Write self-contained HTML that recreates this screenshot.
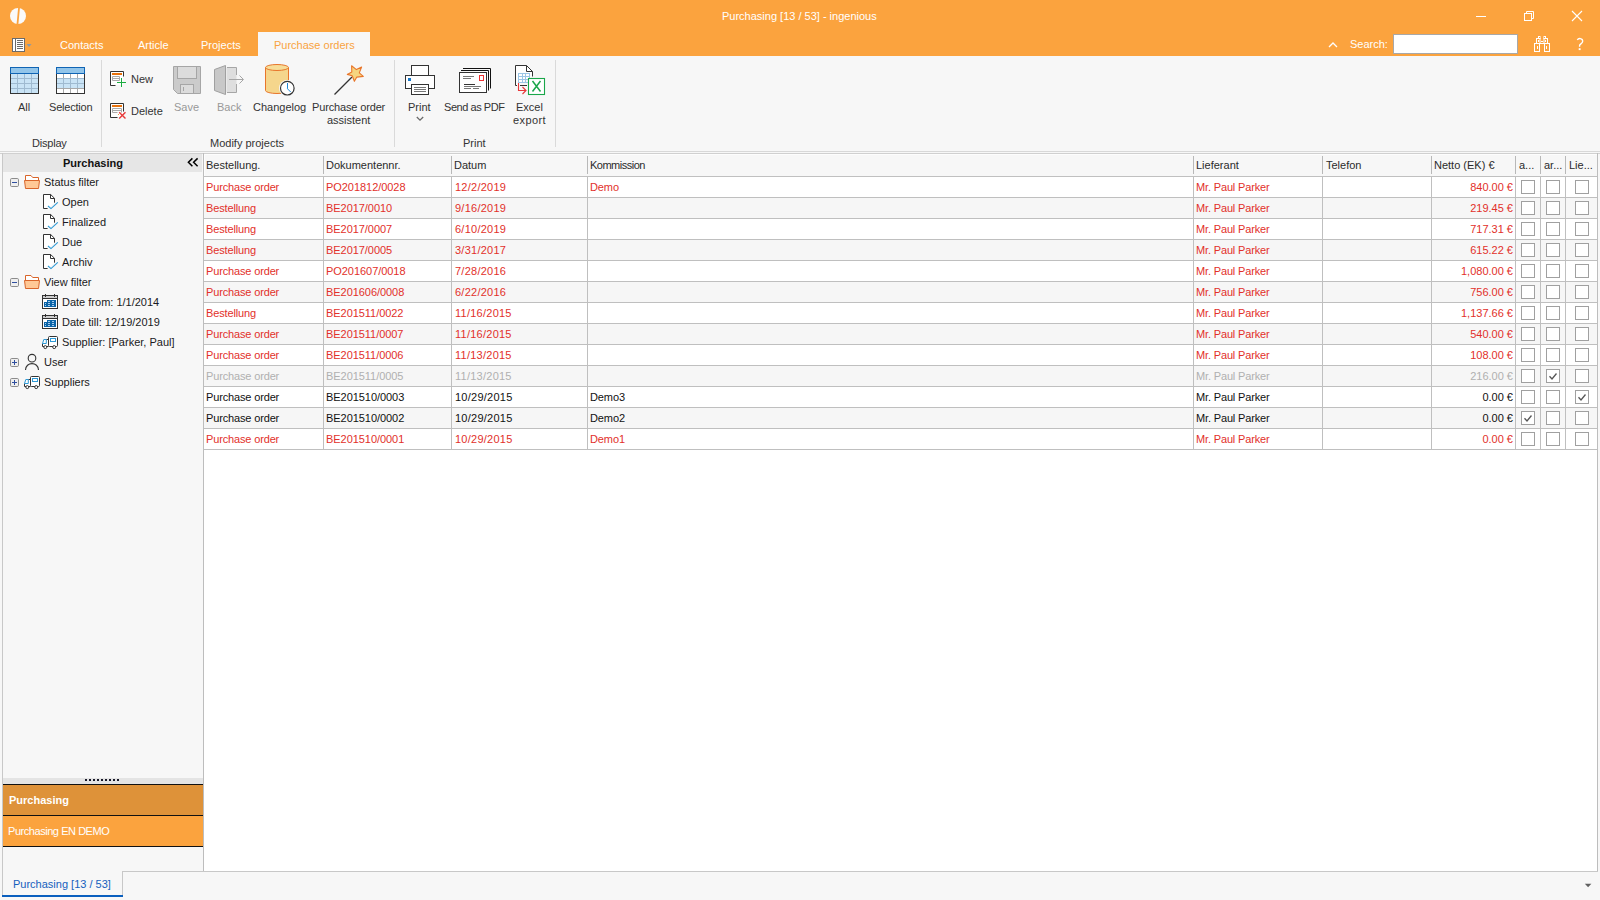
<!DOCTYPE html>
<html><head><meta charset="utf-8">
<style>
*{margin:0;padding:0;box-sizing:border-box}
html,body{width:1600px;height:900px;overflow:hidden;background:#f7f7f7;font-family:"Liberation Sans",sans-serif;font-size:11px;color:#333}
.a{position:absolute}
.t{position:absolute;white-space:nowrap;line-height:13px;font-size:11px}
.hl{position:absolute;height:1px}
.vl{position:absolute;width:1px}
svg{position:absolute;overflow:visible}
</style></head><body>
<!-- title bar -->
<div class="a" style="left:0;top:0;width:1600px;height:56px;background:#fba33e"></div>
<svg style="left:0;top:0" width="40" height="32"><circle cx="18" cy="16" r="8" fill="#fafafa"/><path d="M18.2 7 L20 7 L18.3 25 L16.5 25 Z" fill="#fba33e"/></svg>
<div class="t" style="left:722px;top:10px;color:#fff">Purchasing [13 / 53] - ingenious</div>
<svg style="left:0;top:0" width="1600" height="32">
 <rect x="1476" y="16" width="10" height="1" fill="#fff"/>
 <rect x="1524.5" y="13.5" width="7" height="7" fill="none" stroke="#fff"/>
 <path d="M1526.5 13.5 V11.5 H1533.5 V18.5 H1531.5" fill="none" stroke="#fff"/>
 <path d="M1572 11 L1582 21 M1582 11 L1572 21" stroke="#fff" stroke-width="1.1"/>
</svg>
<!-- tabs -->
<svg style="left:0;top:0" width="40" height="56">
 <rect x="12.5" y="38.5" width="12" height="13" fill="#fff" stroke="#6b6b6b"/>
 <rect x="15" y="38" width="1" height="14" fill="#6b6b6b"/>
 <g fill="#6b6b6b"><rect x="17" y="40" width="6" height="1"/><rect x="17" y="42" width="6" height="1"/><rect x="17" y="44" width="6" height="1"/><rect x="17" y="46" width="6" height="1"/><rect x="17" y="48" width="6" height="1"/></g>
 <path d="M26.5 44 H31.5 L29 47 Z" fill="#8a9aaa"/>
</svg>
<div class="t" style="left:60px;top:39px;color:#fff">Contacts</div>
<div class="t" style="left:138px;top:39px;color:#fff">Article</div>
<div class="t" style="left:201px;top:39px;color:#fff">Projects</div>
<div class="a" style="left:258px;top:32px;width:112px;height:24px;background:#f7f7f7"></div>
<div class="t" style="left:274px;top:39px;color:#f9a33f">Purchase orders</div>
<!-- search -->
<svg style="left:0;top:0" width="1600" height="56">
 <path d="M1329 47 L1333 43 L1337 47" fill="none" stroke="#fff" stroke-width="1.3"/>
</svg>
<div class="t" style="left:1350px;top:38px;color:#fff">Search:</div>
<div class="a" style="left:1393px;top:34px;width:125px;height:20px;background:#fff;border:1px solid #a8a8a8"></div>
<svg style="left:0;top:0" width="1600" height="56">
 <g fill="none" stroke="#fff" stroke-width="1">
 <rect x="1534.5" y="43.5" width="5" height="8"/><rect x="1544.5" y="43.5" width="5" height="8"/>
 <rect x="1536.5" y="38.5" width="3.5" height="5"/><rect x="1544" y="38.5" width="3.5" height="5"/>
 <rect x="1538.5" y="36.5" width="1.5" height="2"/><rect x="1544" y="36.5" width="1.5" height="2"/>
 </g>
 <g fill="#fff"><rect x="1541" y="41" width="2" height="1"/><rect x="1537" y="46" width="1" height="3"/><rect x="1546" y="46" width="1" height="3"/><rect x="1538" y="40" width="1" height="2"/><rect x="1545" y="40" width="1" height="2"/><rect x="1540" y="43" width="4" height="1"/></g>
</svg>
<svg style="left:0;top:0" width="1600" height="56"><path d="M1577.3 40 C1578.5 37.8 1582.7 38 1582.7 41.3 C1582.7 43.6 1579.6 44 1579.6 45.5 V46.8" fill="none" stroke="#fff" stroke-width="1.35"/><rect x="1578.7" y="48.2" width="1.9" height="1.9" fill="#fff"/></svg>

<!-- ribbon -->
<div class="hl" style="left:0;top:151px;width:1600px;background:#d8d8d8"></div>
<div class="hl" style="left:0;top:153px;width:1600px;background:#d0d0d0"></div>
<div class="vl" style="left:101px;top:60px;height:87px;background:#dadada"></div>
<div class="vl" style="left:394px;top:60px;height:87px;background:#dadada"></div>
<div class="vl" style="left:555px;top:60px;height:87px;background:#dadada"></div>


<!-- ribbon icons -->
<svg style="left:0;top:0" width="600" height="151">
 <!-- All -->
 <rect x="11" y="74" width="27" height="19" fill="#c9e3f5"/>
 <g fill="#9fbad0"><rect x="17" y="74" width="1" height="19"/><rect x="24" y="74" width="1" height="19"/><rect x="31" y="74" width="1" height="19"/>
 <rect x="11" y="78" width="27" height="1"/><rect x="11" y="83" width="27" height="1"/><rect x="11" y="88" width="27" height="1"/></g>
 <rect x="10" y="67" width="29" height="7" fill="#1064b4"/><rect x="11" y="68" width="27" height="5" fill="#92c5ea"/>
 <g fill="#333"><rect x="10" y="74" width="1" height="20"/><rect x="38" y="74" width="1" height="20"/><rect x="10" y="93" width="29" height="1"/></g>
 <!-- Selection -->
 <rect x="57" y="74" width="27" height="19" fill="#fff"/>
 <rect x="57" y="79" width="27" height="9" fill="#c9e3f5"/>
 <g fill="#a8a8a8"><rect x="63" y="74" width="1" height="5"/><rect x="70" y="74" width="1" height="5"/><rect x="77" y="74" width="1" height="5"/>
 <rect x="63" y="89" width="1" height="4"/><rect x="70" y="89" width="1" height="4"/><rect x="77" y="89" width="1" height="4"/><rect x="57" y="88" width="27" height="1"/></g>
 <g fill="#9fbad0"><rect x="63" y="79" width="1" height="9"/><rect x="70" y="79" width="1" height="9"/><rect x="77" y="79" width="1" height="9"/>
 <rect x="57" y="78" width="27" height="1"/><rect x="57" y="83" width="27" height="1"/></g>
 <rect x="56" y="67" width="29" height="7" fill="#1064b4"/><rect x="57" y="68" width="27" height="5" fill="#92c5ea"/>
 <g fill="#333"><rect x="56" y="74" width="1" height="20"/><rect x="84" y="74" width="1" height="20"/><rect x="56" y="93" width="29" height="1"/></g>
 <!-- New -->
 <rect x="111" y="72" width="12" height="13" fill="#fff"/>
 <path d="M115.5 85.5 H110.5 V71.5 H123.5 V76.5" fill="none" stroke="#333"/>
 <rect x="112" y="73" width="10" height="2" fill="#e8720c"/>
 <path d="M112.5 76.5 H119.5 V80.5 H112.5 Z M112.5 78.5 H119.5" fill="none" stroke="#aaa"/>
 <path d="M121.5 78 V87 M117 82.5 H126" stroke="#1aab40" stroke-width="1"/>
 <!-- Delete -->
 <rect x="111" y="104" width="12" height="13" fill="#fff"/>
 <path d="M117.5 117.5 H110.5 V103.5 H123.5 V111.5" fill="none" stroke="#333"/>
 <rect x="112" y="105" width="10" height="2" fill="#e8720c"/>
 <path d="M112.5 108.5 H121.5 V112.5 M112.5 108.5 V112.5 H117.5 M112.5 110.5 H121.5" fill="none" stroke="#aaa"/>
 <rect x="118" y="114" width="1" height="1" fill="#f0a040"/>
 <path d="M119.2 112.2 L125.5 118.5 M125.5 112.2 L119.2 118.5" stroke="#e83a3a" stroke-width="1.4"/>
 <!-- Save -->
 <path d="M173.5 66.5 H200.5 V93.5 H177.5 L173.5 89.5 Z" fill="#cbcbcb" stroke="#a6a6a6"/>
 <rect x="177.5" y="66.5" width="19" height="12" fill="#dcdcdc" stroke="#a6a6a6"/>
 <rect x="180.5" y="84.5" width="13" height="9" fill="#dcdcdc" stroke="#a6a6a6"/>
 <rect x="183" y="87" width="1" height="4" fill="#a6a6a6"/>
 <!-- Back -->
 <rect x="226.5" y="67.5" width="10" height="25" fill="#dedede"/>
 <path d="M227 67.5 H236.5 V75 M236.5 84 V92.5 H227" fill="none" stroke="#a6a6a6"/>
 <path d="M214.5 69.5 L225.5 65.5 V94.5 L214.5 90.5 Z" fill="#c8c8c8" stroke="#a0a0a0"/>
 <path d="M229 79.5 H243 M239.5 75.5 L243.5 79.5 L239.5 83.5" fill="none" stroke="#a6a6a6"/>
 <!-- Changelog -->
 <path d="M265.5 67.5 V90.5 A11.5 3 0 0 0 288.5 90.5 V67.5" fill="#f5d68c" stroke="#e8762b"/>
 <ellipse cx="277" cy="67.5" rx="11.5" ry="3" fill="#f7dd98" stroke="#e8762b"/>
 <circle cx="287.3" cy="88.2" r="8.3" fill="#f7f7f7"/>
 <circle cx="287.3" cy="88.2" r="6.8" fill="#fff" stroke="#333" stroke-width="1.2"/>
 <path d="M287.5 83 V88.8 L290.7 92" fill="none" stroke="#1e88d6" stroke-width="1"/>
 <!-- Wand -->
 <path d="M334.5 94.5 L352 77" stroke="#333" stroke-width="1.2"/>
 <path d="M351.6 65.8 L356.4 69.6 L361.6 67.1 L359.3 72.9 L363.3 76.4 L356.8 77.1 L354.4 81.3 L352.2 75.8 L347.3 74.4 L351.8 72 Z" fill="#f5d580" stroke="#e8762b" stroke-width="1.1" stroke-linejoin="round"/>
 <!-- Printer -->
 <rect x="411.5" y="65.5" width="17" height="10" fill="#fff" stroke="#333"/>
 <rect x="405.5" y="75.5" width="29" height="13" fill="#fff" stroke="#333"/>
 <rect x="411.5" y="84.5" width="17" height="10" fill="#fff" stroke="#333"/>
 <rect x="408" y="78" width="3" height="3" fill="#1a78c8"/>
 <g fill="#777"><rect x="414" y="87" width="12" height="1"/><rect x="414" y="89" width="12" height="1"/><rect x="414" y="91" width="12" height="1"/></g>
 <!-- Envelopes -->
 <path d="M463 68.5 H490.5 V88.5" fill="none" stroke="#111"/>
 <path d="M461 70.5 H488.5 V90.5" fill="none" stroke="#111"/>
 <rect x="459.5" y="72.5" width="27" height="20" fill="#fff" stroke="#333"/>
 <rect x="479.5" y="75.5" width="4" height="5" fill="none" stroke="#e33"/>
 <g fill="#777"><rect x="463" y="76" width="11" height="1"/><rect x="463" y="78" width="8" height="1"/><rect x="464" y="86" width="17" height="1"/><rect x="464" y="88" width="7" height="1"/><rect x="473" y="88" width="6" height="1"/></g>
 <rect x="464" y="84" width="11" height="1" fill="#333"/>
 <!-- Excel -->
 <path d="M517 85.5 H515.5 V65.5 H526.5 L532.5 71.5 V76.5 M520 85.5 H527" fill="#fff" stroke="#333"/>
 <path d="M526.5 65.5 V71.5 H532.5" fill="none" stroke="#333"/>
 <rect x="518.5" y="73.5" width="11" height="9" fill="none" stroke="#9cc6e6"/>
 <g fill="#9cc6e6"><rect x="522" y="73" width="1" height="10"/><rect x="525" y="73" width="1" height="10"/><rect x="518" y="76" width="12" height="1"/><rect x="518" y="79" width="12" height="1"/></g>
 <path d="M518.5 83 V90.5 H526 M522.5 87 L526 90.5 L522.5 94" fill="none" stroke="#e8383a" stroke-width="1.1"/>
 <rect x="528.5" y="78.5" width="16" height="16" fill="#fff" stroke="#1aa64a" stroke-width="1.1"/>
 <path d="M532.5 81 L540.5 91.5 M540.5 81 L532.5 91.5" stroke="#1aa64a" stroke-width="1.5"/>
</svg>
<div class="t" style="left:18px;top:101px">All</div>
<div class="t" style="left:49px;top:101px;letter-spacing:-0.2px">Selection</div>
<div class="t" style="left:131px;top:73px">New</div>
<div class="t" style="left:131px;top:105px">Delete</div>
<div class="t" style="left:174px;top:101px;color:#999">Save</div>
<div class="t" style="left:217px;top:101px;color:#999">Back</div>
<div class="t" style="left:253px;top:101px">Changelog</div>
<div class="t" style="left:312px;top:101px;letter-spacing:-0.15px">Purchase order</div>
<div class="t" style="left:327px;top:114px">assistent</div>
<div class="t" style="left:408px;top:101px">Print</div>
<svg style="left:0;top:0" width="600" height="151"><path d="M416.8 117 L420 120.2 L423.2 117" fill="none" stroke="#6a6a6a" stroke-width="1.3"/></svg>
<div class="t" style="left:444px;top:101px;letter-spacing:-0.45px">Send as PDF</div>
<div class="t" style="left:516px;top:101px">Excel</div>
<div class="t" style="left:513px;top:114px;letter-spacing:0.4px">export</div>
<div class="t" style="left:32px;top:137px;letter-spacing:-0.2px">Display</div>
<div class="t" style="left:210px;top:137px">Modify projects</div>
<div class="t" style="left:463px;top:137px">Print</div>

<!-- sidebar -->
<div class="vl" style="left:2px;top:153px;height:743px;background:#c8c8c8"></div>
<div class="vl" style="left:203px;top:153px;height:718px;background:#bdbdbd"></div>
<div class="a" style="left:3px;top:154px;width:199px;height:18px;background:#e6e6e6"></div>
<div class="t" style="left:63px;top:157px;font-weight:bold;color:#111">Purchasing</div>


<svg style="left:0;top:0" width="210" height="400">
 <path d="M192.4 158.4 L188.4 162.3 L192.4 166.2 M197.6 158.4 L193.6 162.3 L197.6 166.2" fill="none" stroke="#000" stroke-width="1.5"/>
 <defs><linearGradient id="bxg" x1="0" y1="0" x2="0" y2="1"><stop offset="0" stop-color="#fff"/><stop offset="1" stop-color="#e2e2e2"/></linearGradient></defs>
 <g><rect x="10.5" y="178.5" width="8" height="8" rx="1.2" fill="#efefef" stroke="#8c8c8c"/><rect x="12" y="182" width="5" height="1" fill="#2f4f9f"/></g><g><path d="M25.5 181 V175.5 H31 L32.7 177.5 H38.5 V181" fill="#fff" stroke="#d9652a"/>
   <path d="M24.5 180.5 H39.5 L38.5 188.5 H25.5 Z" fill="#ffc896" stroke="#d9652a"/></g>
 <g><path d="M47.6 208.5 H43.5 V194.5 H50.7 L54.5 198.3 V202.7" fill="#fff" stroke="#333"/>
   <path d="M50.5 194.5 V198.5 H54.5" fill="none" stroke="#333"/>
   <path d="M48 206 L51 208.6 L57.8 202.4" fill="none" stroke="#2e9ad6" stroke-width="1.1"/></g><g transform="translate(0,20)"><path d="M47.6 208.5 H43.5 V194.5 H50.7 L54.5 198.3 V202.7" fill="#fff" stroke="#333"/>
   <path d="M50.5 194.5 V198.5 H54.5" fill="none" stroke="#333"/>
   <path d="M48 206 L51 208.6 L57.8 202.4" fill="none" stroke="#2e9ad6" stroke-width="1.1"/></g><g transform="translate(0,40)"><path d="M47.6 208.5 H43.5 V194.5 H50.7 L54.5 198.3 V202.7" fill="#fff" stroke="#333"/>
   <path d="M50.5 194.5 V198.5 H54.5" fill="none" stroke="#333"/>
   <path d="M48 206 L51 208.6 L57.8 202.4" fill="none" stroke="#2e9ad6" stroke-width="1.1"/></g><g transform="translate(0,60)"><path d="M47.6 208.5 H43.5 V194.5 H50.7 L54.5 198.3 V202.7" fill="#fff" stroke="#333"/>
   <path d="M50.5 194.5 V198.5 H54.5" fill="none" stroke="#333"/>
   <path d="M48 206 L51 208.6 L57.8 202.4" fill="none" stroke="#2e9ad6" stroke-width="1.1"/></g>
 <g transform="translate(0,100)"><rect x="10.5" y="178.5" width="8" height="8" rx="1.2" fill="#efefef" stroke="#8c8c8c"/><rect x="12" y="182" width="5" height="1" fill="#2f4f9f"/></g><g transform="translate(0,100)"><path d="M25.5 181 V175.5 H31 L32.7 177.5 H38.5 V181" fill="#fff" stroke="#d9652a"/>
   <path d="M24.5 180.5 H39.5 L38.5 188.5 H25.5 Z" fill="#ffc896" stroke="#d9652a"/></g>
 <g><rect x="42.5" y="295.5" width="15" height="13" fill="#fff" stroke="#333"/>
   <rect x="43" y="296" width="14" height="2" fill="#cfcfcf"/><rect x="43" y="298" width="14" height="1" fill="#333"/>
   <rect x="45" y="294" width="1" height="3" fill="#333"/><rect x="54" y="294" width="1" height="3" fill="#333"/>
   <rect x="47" y="300" width="9" height="7" fill="#0a64a8"/><rect x="44" y="302" width="3" height="5" fill="#0a64a8"/>
   <g fill="#a8ccee"><rect x="48" y="301" width="2" height="1"/><rect x="52" y="301" width="2" height="1"/><rect x="45" y="303" width="1" height="1"/><rect x="48" y="303" width="2" height="1"/><rect x="52" y="303" width="2" height="1"/><rect x="45" y="305" width="1" height="1"/><rect x="48" y="305" width="2" height="1"/><rect x="52" y="305" width="2" height="1"/></g></g><g transform="translate(0,20)"><rect x="42.5" y="295.5" width="15" height="13" fill="#fff" stroke="#333"/>
   <rect x="43" y="296" width="14" height="2" fill="#cfcfcf"/><rect x="43" y="298" width="14" height="1" fill="#333"/>
   <rect x="45" y="294" width="1" height="3" fill="#333"/><rect x="54" y="294" width="1" height="3" fill="#333"/>
   <rect x="47" y="300" width="9" height="7" fill="#0a64a8"/><rect x="44" y="302" width="3" height="5" fill="#0a64a8"/>
   <g fill="#a8ccee"><rect x="48" y="301" width="2" height="1"/><rect x="52" y="301" width="2" height="1"/><rect x="45" y="303" width="1" height="1"/><rect x="48" y="303" width="2" height="1"/><rect x="52" y="303" width="2" height="1"/><rect x="45" y="305" width="1" height="1"/><rect x="48" y="305" width="2" height="1"/><rect x="52" y="305" width="2" height="1"/></g></g>
 <g><rect x="48.5" y="336.5" width="9" height="10" rx="1" fill="#fff" stroke="#333"/>
   <rect x="50.5" y="338.5" width="5" height="3" fill="none" stroke="#2e9ad6"/>
   <path d="M46.3 339.5 H48.5 M42.5 343.5 V346.5 H48.5" fill="none" stroke="#333"/>
   <rect x="43" y="340" width="5" height="6" fill="#fff"/>
   <path d="M42.5 343.5 L43.8 339.5 H46.3 V343.5 Z" fill="none" stroke="#2e9ad6"/>
   <circle cx="45.3" cy="347.1" r="1.5" fill="#fff" stroke="#333"/><circle cx="54.2" cy="347.1" r="1.5" fill="#fff" stroke="#333"/></g>
 <g transform="translate(0,180)"><rect x="10.5" y="178.5" width="8" height="8" rx="1.2" fill="#efefef" stroke="#8c8c8c"/><rect x="12" y="182" width="5" height="1" fill="#2f4f9f"/><rect x="14" y="180" width="1" height="5" fill="#2f4f9f"/></g>
 <circle cx="32" cy="358.2" r="3.8" fill="none" stroke="#333" stroke-width="1.1"/>
 <path d="M25.5 370 C25.5 361.5 38.5 361.5 38.5 370" fill="none" stroke="#333" stroke-width="1.1"/>
 <g transform="translate(0,200)"><rect x="10.5" y="178.5" width="8" height="8" rx="1.2" fill="#efefef" stroke="#8c8c8c"/><rect x="12" y="182" width="5" height="1" fill="#2f4f9f"/><rect x="14" y="180" width="1" height="5" fill="#2f4f9f"/></g>
 <g transform="translate(-18,40)"><rect x="48.5" y="336.5" width="9" height="10" rx="1" fill="#fff" stroke="#333"/>
   <rect x="50.5" y="338.5" width="5" height="3" fill="none" stroke="#2e9ad6"/>
   <path d="M46.3 339.5 H48.5 M42.5 343.5 V346.5 H48.5" fill="none" stroke="#333"/>
   <rect x="43" y="340" width="5" height="6" fill="#fff"/>
   <path d="M42.5 343.5 L43.8 339.5 H46.3 V343.5 Z" fill="none" stroke="#2e9ad6"/>
   <circle cx="45.3" cy="347.1" r="1.5" fill="#fff" stroke="#333"/><circle cx="54.2" cy="347.1" r="1.5" fill="#fff" stroke="#333"/></g>
</svg>
<div class="t" style="left:44px;top:176px;color:#1a1a22">Status filter</div>
<div class="t" style="left:62px;top:196px;color:#1a1a22">Open</div>
<div class="t" style="left:62px;top:216px;color:#1a1a22">Finalized</div>
<div class="t" style="left:62px;top:236px;color:#1a1a22">Due</div>
<div class="t" style="left:62px;top:256px;color:#1a1a22">Archiv</div>
<div class="t" style="left:44px;top:276px;color:#1a1a22">View filter</div>
<div class="t" style="left:62px;top:296px;color:#1a1a22">Date from: 1/1/2014</div>
<div class="t" style="left:62px;top:316px;color:#1a1a22">Date till: 12/19/2019</div>
<div class="t" style="left:62px;top:336px;color:#1a1a22">Supplier: [Parker, Paul]</div>
<div class="t" style="left:44px;top:356px;color:#1a1a22">User</div>
<div class="t" style="left:44px;top:376px;color:#1a1a22">Suppliers</div>


<div class="a" style="left:3px;top:778px;width:200px;height:6px;background:#e4e4e4"></div>
<div class="hl" style="left:3px;top:784px;width:200px;background:#111"></div>
<div class="a" style="left:3px;top:785px;width:200px;height:30px;background:#de9239"></div>
<div class="hl" style="left:3px;top:815px;width:200px;background:#111"></div>
<div class="a" style="left:3px;top:816px;width:200px;height:30px;background:#fba33e"></div>
<div class="hl" style="left:3px;top:846px;width:200px;background:#111"></div>
<div class="t" style="left:9px;top:794px;font-weight:bold;color:#fff">Purchasing</div>
<div class="t" style="left:8px;top:825px;color:#fff;letter-spacing:-0.45px">Purchasing EN DEMO</div>
<svg style="left:0;top:0" width="210" height="800"><g fill="#1a1a2a">
 <rect x="85" y="779" width="2" height="2"/><rect x="89" y="779" width="2" height="2"/><rect x="93" y="779" width="2" height="2"/><rect x="97" y="779" width="2" height="2"/><rect x="101" y="779" width="2" height="2"/><rect x="105" y="779" width="2" height="2"/><rect x="109" y="779" width="2" height="2"/><rect x="113" y="779" width="2" height="2"/><rect x="117" y="779" width="2" height="2"/>
</g></svg>

<!-- grid -->
<div class="a" style="left:204px;top:154px;width:1393px;height:717px;background:#fff"></div>
<div class="a" style="left:204px;top:154px;width:1393px;height:22px;background:#f7f7f7"></div>
<div class="hl" style="left:204px;top:154px;width:1393px;background:#fdfdfd"></div><div class="vl" style="left:204px;top:154px;height:22px;background:#fdfdfd"></div>
<div class="vl" style="left:1597px;top:153px;height:718px;background:#bdbdbd"></div>
<div class="hl" style="left:203px;top:176px;width:1394px;background:#c0c0c0"></div>
<div class="t" style="left:206px;top:159px;color:#2b2b2b;letter-spacing:0">Bestellung.</div>
<div class="t" style="left:326px;top:159px;color:#2b2b2b;letter-spacing:0">Dokumentennr.</div>
<div class="t" style="left:454px;top:159px;color:#2b2b2b;letter-spacing:0">Datum</div>
<div class="t" style="left:590px;top:159px;color:#2b2b2b;letter-spacing:-0.5px">Kommission</div>
<div class="t" style="left:1196px;top:159px;color:#2b2b2b;letter-spacing:0">Lieferant</div>
<div class="t" style="left:1326px;top:159px;color:#2b2b2b;letter-spacing:0">Telefon</div>
<div class="t" style="left:1434px;top:159px;color:#2b2b2b;letter-spacing:0">Netto (EK) €</div>
<div class="t" style="left:1519px;top:159px;color:#2b2b2b;letter-spacing:0">a...</div>
<div class="t" style="left:1544px;top:159px;color:#2b2b2b;letter-spacing:0">ar...</div>
<div class="t" style="left:1569px;top:159px;color:#2b2b2b;letter-spacing:0">Lie...</div>
<div class="vl" style="left:323px;top:156px;height:18px;background:#b8b8b8"></div>
<div class="vl" style="left:451px;top:156px;height:18px;background:#b8b8b8"></div>
<div class="vl" style="left:587px;top:156px;height:18px;background:#b8b8b8"></div>
<div class="vl" style="left:1193px;top:156px;height:18px;background:#b8b8b8"></div>
<div class="vl" style="left:1322px;top:156px;height:18px;background:#b8b8b8"></div>
<div class="vl" style="left:1431px;top:156px;height:18px;background:#b8b8b8"></div>
<div class="vl" style="left:1515px;top:156px;height:18px;background:#b8b8b8"></div>
<div class="vl" style="left:1540px;top:156px;height:18px;background:#b8b8b8"></div>
<div class="vl" style="left:1565px;top:156px;height:18px;background:#b8b8b8"></div>
<div class="a" style="left:204px;top:177px;width:1393px;height:20px;background:#fff"></div>
<div class="hl" style="left:204px;top:197px;width:1393px;background:#bfbfbf"></div>
<div class="t" style="left:206px;top:181px;color:#e2302a;letter-spacing:-0.15px">Purchase order</div>
<div class="t" style="left:326px;top:181px;color:#e2302a;letter-spacing:-0.05px">PO201812/0028</div>
<div class="t" style="left:455px;top:181px;color:#e2302a;letter-spacing:0.25px">12/2/2019</div>
<div class="t" style="left:590px;top:181px;color:#e2302a;letter-spacing:-0.1px">Demo</div>
<div class="t" style="left:1196px;top:181px;color:#e2302a;letter-spacing:-0.15px">Mr. Paul Parker</div>
<div class="t" style="right:87px;top:181px;color:#e2302a">840.00 €</div>
<div class="a" style="left:1521px;top:180px;width:14px;height:14px;border:1px solid #a0a0a0;background:#fff"></div>
<div class="a" style="left:1546px;top:180px;width:14px;height:14px;border:1px solid #a0a0a0;background:#fff"></div>
<div class="a" style="left:1575px;top:180px;width:14px;height:14px;border:1px solid #a0a0a0;background:#fff"></div>
<div class="a" style="left:204px;top:198px;width:1393px;height:20px;background:#f6f6f6"></div>
<div class="hl" style="left:204px;top:218px;width:1393px;background:#bfbfbf"></div>
<div class="t" style="left:206px;top:202px;color:#e2302a;letter-spacing:-0.15px">Bestellung</div>
<div class="t" style="left:326px;top:202px;color:#e2302a;letter-spacing:-0.05px">BE2017/0010</div>
<div class="t" style="left:455px;top:202px;color:#e2302a;letter-spacing:0.25px">9/16/2019</div>
<div class="t" style="left:1196px;top:202px;color:#e2302a;letter-spacing:-0.15px">Mr. Paul Parker</div>
<div class="t" style="right:87px;top:202px;color:#e2302a">219.45 €</div>
<div class="a" style="left:1521px;top:201px;width:14px;height:14px;border:1px solid #a0a0a0;background:#fff"></div>
<div class="a" style="left:1546px;top:201px;width:14px;height:14px;border:1px solid #a0a0a0;background:#fff"></div>
<div class="a" style="left:1575px;top:201px;width:14px;height:14px;border:1px solid #a0a0a0;background:#fff"></div>
<div class="a" style="left:204px;top:219px;width:1393px;height:20px;background:#fff"></div>
<div class="hl" style="left:204px;top:239px;width:1393px;background:#bfbfbf"></div>
<div class="t" style="left:206px;top:223px;color:#e2302a;letter-spacing:-0.15px">Bestellung</div>
<div class="t" style="left:326px;top:223px;color:#e2302a;letter-spacing:-0.05px">BE2017/0007</div>
<div class="t" style="left:455px;top:223px;color:#e2302a;letter-spacing:0.25px">6/10/2019</div>
<div class="t" style="left:1196px;top:223px;color:#e2302a;letter-spacing:-0.15px">Mr. Paul Parker</div>
<div class="t" style="right:87px;top:223px;color:#e2302a">717.31 €</div>
<div class="a" style="left:1521px;top:222px;width:14px;height:14px;border:1px solid #a0a0a0;background:#fff"></div>
<div class="a" style="left:1546px;top:222px;width:14px;height:14px;border:1px solid #a0a0a0;background:#fff"></div>
<div class="a" style="left:1575px;top:222px;width:14px;height:14px;border:1px solid #a0a0a0;background:#fff"></div>
<div class="a" style="left:204px;top:240px;width:1393px;height:20px;background:#f6f6f6"></div>
<div class="hl" style="left:204px;top:260px;width:1393px;background:#bfbfbf"></div>
<div class="t" style="left:206px;top:244px;color:#e2302a;letter-spacing:-0.15px">Bestellung</div>
<div class="t" style="left:326px;top:244px;color:#e2302a;letter-spacing:-0.05px">BE2017/0005</div>
<div class="t" style="left:455px;top:244px;color:#e2302a;letter-spacing:0.25px">3/31/2017</div>
<div class="t" style="left:1196px;top:244px;color:#e2302a;letter-spacing:-0.15px">Mr. Paul Parker</div>
<div class="t" style="right:87px;top:244px;color:#e2302a">615.22 €</div>
<div class="a" style="left:1521px;top:243px;width:14px;height:14px;border:1px solid #a0a0a0;background:#fff"></div>
<div class="a" style="left:1546px;top:243px;width:14px;height:14px;border:1px solid #a0a0a0;background:#fff"></div>
<div class="a" style="left:1575px;top:243px;width:14px;height:14px;border:1px solid #a0a0a0;background:#fff"></div>
<div class="a" style="left:204px;top:261px;width:1393px;height:20px;background:#fff"></div>
<div class="hl" style="left:204px;top:281px;width:1393px;background:#bfbfbf"></div>
<div class="t" style="left:206px;top:265px;color:#e2302a;letter-spacing:-0.15px">Purchase order</div>
<div class="t" style="left:326px;top:265px;color:#e2302a;letter-spacing:-0.05px">PO201607/0018</div>
<div class="t" style="left:455px;top:265px;color:#e2302a;letter-spacing:0.25px">7/28/2016</div>
<div class="t" style="left:1196px;top:265px;color:#e2302a;letter-spacing:-0.15px">Mr. Paul Parker</div>
<div class="t" style="right:87px;top:265px;color:#e2302a">1,080.00 €</div>
<div class="a" style="left:1521px;top:264px;width:14px;height:14px;border:1px solid #a0a0a0;background:#fff"></div>
<div class="a" style="left:1546px;top:264px;width:14px;height:14px;border:1px solid #a0a0a0;background:#fff"></div>
<div class="a" style="left:1575px;top:264px;width:14px;height:14px;border:1px solid #a0a0a0;background:#fff"></div>
<div class="a" style="left:204px;top:282px;width:1393px;height:20px;background:#f6f6f6"></div>
<div class="hl" style="left:204px;top:302px;width:1393px;background:#bfbfbf"></div>
<div class="t" style="left:206px;top:286px;color:#e2302a;letter-spacing:-0.15px">Purchase order</div>
<div class="t" style="left:326px;top:286px;color:#e2302a;letter-spacing:-0.05px">BE201606/0008</div>
<div class="t" style="left:455px;top:286px;color:#e2302a;letter-spacing:0.25px">6/22/2016</div>
<div class="t" style="left:1196px;top:286px;color:#e2302a;letter-spacing:-0.15px">Mr. Paul Parker</div>
<div class="t" style="right:87px;top:286px;color:#e2302a">756.00 €</div>
<div class="a" style="left:1521px;top:285px;width:14px;height:14px;border:1px solid #a0a0a0;background:#fff"></div>
<div class="a" style="left:1546px;top:285px;width:14px;height:14px;border:1px solid #a0a0a0;background:#fff"></div>
<div class="a" style="left:1575px;top:285px;width:14px;height:14px;border:1px solid #a0a0a0;background:#fff"></div>
<div class="a" style="left:204px;top:303px;width:1393px;height:20px;background:#fff"></div>
<div class="hl" style="left:204px;top:323px;width:1393px;background:#bfbfbf"></div>
<div class="t" style="left:206px;top:307px;color:#e2302a;letter-spacing:-0.15px">Bestellung</div>
<div class="t" style="left:326px;top:307px;color:#e2302a;letter-spacing:-0.05px">BE201511/0022</div>
<div class="t" style="left:455px;top:307px;color:#e2302a;letter-spacing:0.25px">11/16/2015</div>
<div class="t" style="left:1196px;top:307px;color:#e2302a;letter-spacing:-0.15px">Mr. Paul Parker</div>
<div class="t" style="right:87px;top:307px;color:#e2302a">1,137.66 €</div>
<div class="a" style="left:1521px;top:306px;width:14px;height:14px;border:1px solid #a0a0a0;background:#fff"></div>
<div class="a" style="left:1546px;top:306px;width:14px;height:14px;border:1px solid #a0a0a0;background:#fff"></div>
<div class="a" style="left:1575px;top:306px;width:14px;height:14px;border:1px solid #a0a0a0;background:#fff"></div>
<div class="a" style="left:204px;top:324px;width:1393px;height:20px;background:#f6f6f6"></div>
<div class="hl" style="left:204px;top:344px;width:1393px;background:#bfbfbf"></div>
<div class="t" style="left:206px;top:328px;color:#e2302a;letter-spacing:-0.15px">Purchase order</div>
<div class="t" style="left:326px;top:328px;color:#e2302a;letter-spacing:-0.05px">BE201511/0007</div>
<div class="t" style="left:455px;top:328px;color:#e2302a;letter-spacing:0.25px">11/16/2015</div>
<div class="t" style="left:1196px;top:328px;color:#e2302a;letter-spacing:-0.15px">Mr. Paul Parker</div>
<div class="t" style="right:87px;top:328px;color:#e2302a">540.00 €</div>
<div class="a" style="left:1521px;top:327px;width:14px;height:14px;border:1px solid #a0a0a0;background:#fff"></div>
<div class="a" style="left:1546px;top:327px;width:14px;height:14px;border:1px solid #a0a0a0;background:#fff"></div>
<div class="a" style="left:1575px;top:327px;width:14px;height:14px;border:1px solid #a0a0a0;background:#fff"></div>
<div class="a" style="left:204px;top:345px;width:1393px;height:20px;background:#fff"></div>
<div class="hl" style="left:204px;top:365px;width:1393px;background:#bfbfbf"></div>
<div class="t" style="left:206px;top:349px;color:#e2302a;letter-spacing:-0.15px">Purchase order</div>
<div class="t" style="left:326px;top:349px;color:#e2302a;letter-spacing:-0.05px">BE201511/0006</div>
<div class="t" style="left:455px;top:349px;color:#e2302a;letter-spacing:0.25px">11/13/2015</div>
<div class="t" style="left:1196px;top:349px;color:#e2302a;letter-spacing:-0.15px">Mr. Paul Parker</div>
<div class="t" style="right:87px;top:349px;color:#e2302a">108.00 €</div>
<div class="a" style="left:1521px;top:348px;width:14px;height:14px;border:1px solid #a0a0a0;background:#fff"></div>
<div class="a" style="left:1546px;top:348px;width:14px;height:14px;border:1px solid #a0a0a0;background:#fff"></div>
<div class="a" style="left:1575px;top:348px;width:14px;height:14px;border:1px solid #a0a0a0;background:#fff"></div>
<div class="a" style="left:204px;top:366px;width:1393px;height:20px;background:#f6f6f6"></div>
<div class="hl" style="left:204px;top:386px;width:1393px;background:#bfbfbf"></div>
<div class="t" style="left:206px;top:370px;color:#b0b0b0;letter-spacing:-0.15px">Purchase order</div>
<div class="t" style="left:326px;top:370px;color:#b0b0b0;letter-spacing:-0.05px">BE201511/0005</div>
<div class="t" style="left:455px;top:370px;color:#b0b0b0;letter-spacing:0.25px">11/13/2015</div>
<div class="t" style="left:1196px;top:370px;color:#b0b0b0;letter-spacing:-0.15px">Mr. Paul Parker</div>
<div class="t" style="right:87px;top:370px;color:#b0b0b0">216.00 €</div>
<div class="a" style="left:1521px;top:369px;width:14px;height:14px;border:1px solid #a0a0a0;background:#fff"></div>
<div class="a" style="left:1546px;top:369px;width:14px;height:14px;border:1px solid #a0a0a0;background:#fff"></div>
<svg style="left:1546px;top:369px" width="14" height="14"><path d="M3.5 7.3 L6 10 L10.5 4.5" fill="none" stroke="#555" stroke-width="1.3"/></svg>
<div class="a" style="left:1575px;top:369px;width:14px;height:14px;border:1px solid #a0a0a0;background:#fff"></div>
<div class="a" style="left:204px;top:387px;width:1393px;height:20px;background:#fff"></div>
<div class="hl" style="left:204px;top:407px;width:1393px;background:#bfbfbf"></div>
<div class="t" style="left:206px;top:391px;color:#111;letter-spacing:-0.15px">Purchase order</div>
<div class="t" style="left:326px;top:391px;color:#111;letter-spacing:-0.05px">BE201510/0003</div>
<div class="t" style="left:455px;top:391px;color:#111;letter-spacing:0.25px">10/29/2015</div>
<div class="t" style="left:590px;top:391px;color:#111;letter-spacing:-0.1px">Demo3</div>
<div class="t" style="left:1196px;top:391px;color:#111;letter-spacing:-0.15px">Mr. Paul Parker</div>
<div class="t" style="right:87px;top:391px;color:#111">0.00 €</div>
<div class="a" style="left:1521px;top:390px;width:14px;height:14px;border:1px solid #a0a0a0;background:#fff"></div>
<div class="a" style="left:1546px;top:390px;width:14px;height:14px;border:1px solid #a0a0a0;background:#fff"></div>
<div class="a" style="left:1575px;top:390px;width:14px;height:14px;border:1px solid #a0a0a0;background:#fff"></div>
<svg style="left:1575px;top:390px" width="14" height="14"><path d="M3.5 7.3 L6 10 L10.5 4.5" fill="none" stroke="#555" stroke-width="1.3"/></svg>
<div class="a" style="left:204px;top:408px;width:1393px;height:20px;background:#f6f6f6"></div>
<div class="hl" style="left:204px;top:428px;width:1393px;background:#bfbfbf"></div>
<div class="t" style="left:206px;top:412px;color:#111;letter-spacing:-0.15px">Purchase order</div>
<div class="t" style="left:326px;top:412px;color:#111;letter-spacing:-0.05px">BE201510/0002</div>
<div class="t" style="left:455px;top:412px;color:#111;letter-spacing:0.25px">10/29/2015</div>
<div class="t" style="left:590px;top:412px;color:#111;letter-spacing:-0.1px">Demo2</div>
<div class="t" style="left:1196px;top:412px;color:#111;letter-spacing:-0.15px">Mr. Paul Parker</div>
<div class="t" style="right:87px;top:412px;color:#111">0.00 €</div>
<div class="a" style="left:1521px;top:411px;width:14px;height:14px;border:1px solid #a0a0a0;background:#fff"></div>
<svg style="left:1521px;top:411px" width="14" height="14"><path d="M3.5 7.3 L6 10 L10.5 4.5" fill="none" stroke="#555" stroke-width="1.3"/></svg>
<div class="a" style="left:1546px;top:411px;width:14px;height:14px;border:1px solid #a0a0a0;background:#fff"></div>
<div class="a" style="left:1575px;top:411px;width:14px;height:14px;border:1px solid #a0a0a0;background:#fff"></div>
<div class="a" style="left:204px;top:429px;width:1393px;height:20px;background:#fff"></div>
<div class="hl" style="left:204px;top:449px;width:1393px;background:#bfbfbf"></div>
<div class="t" style="left:206px;top:433px;color:#e2302a;letter-spacing:-0.15px">Purchase order</div>
<div class="t" style="left:326px;top:433px;color:#e2302a;letter-spacing:-0.05px">BE201510/0001</div>
<div class="t" style="left:455px;top:433px;color:#e2302a;letter-spacing:0.25px">10/29/2015</div>
<div class="t" style="left:590px;top:433px;color:#e2302a;letter-spacing:-0.1px">Demo1</div>
<div class="t" style="left:1196px;top:433px;color:#e2302a;letter-spacing:-0.15px">Mr. Paul Parker</div>
<div class="t" style="right:87px;top:433px;color:#e2302a">0.00 €</div>
<div class="a" style="left:1521px;top:432px;width:14px;height:14px;border:1px solid #a0a0a0;background:#fff"></div>
<div class="a" style="left:1546px;top:432px;width:14px;height:14px;border:1px solid #a0a0a0;background:#fff"></div>
<div class="a" style="left:1575px;top:432px;width:14px;height:14px;border:1px solid #a0a0a0;background:#fff"></div>
<div class="vl" style="left:323px;top:177px;height:273px;background:#bfbfbf"></div>
<div class="vl" style="left:451px;top:177px;height:273px;background:#bfbfbf"></div>
<div class="vl" style="left:587px;top:177px;height:273px;background:#bfbfbf"></div>
<div class="vl" style="left:1193px;top:177px;height:273px;background:#bfbfbf"></div>
<div class="vl" style="left:1322px;top:177px;height:273px;background:#bfbfbf"></div>
<div class="vl" style="left:1431px;top:177px;height:273px;background:#bfbfbf"></div>
<div class="vl" style="left:1515px;top:177px;height:273px;background:#bfbfbf"></div>
<div class="vl" style="left:1540px;top:177px;height:273px;background:#bfbfbf"></div>
<div class="vl" style="left:1565px;top:177px;height:273px;background:#bfbfbf"></div>

<!-- status bar -->
<div class="hl" style="left:122px;top:871px;width:1476px;background:#c8c8c8"></div>
<div class="vl" style="left:122px;top:871px;height:25px;background:#c8c8c8"></div>
<div class="a" style="left:2px;top:895px;width:121px;height:2px;background:#0a5fbe"></div>
<div class="t" style="left:13px;top:878px;color:#1560bd">Purchasing [13 / 53]</div>
<svg style="left:0;top:0" width="1600" height="900"><path d="M1584.8 883.8 H1591.4 L1588.1 887.3 Z" fill="#606060"/></svg>
</body></html>
